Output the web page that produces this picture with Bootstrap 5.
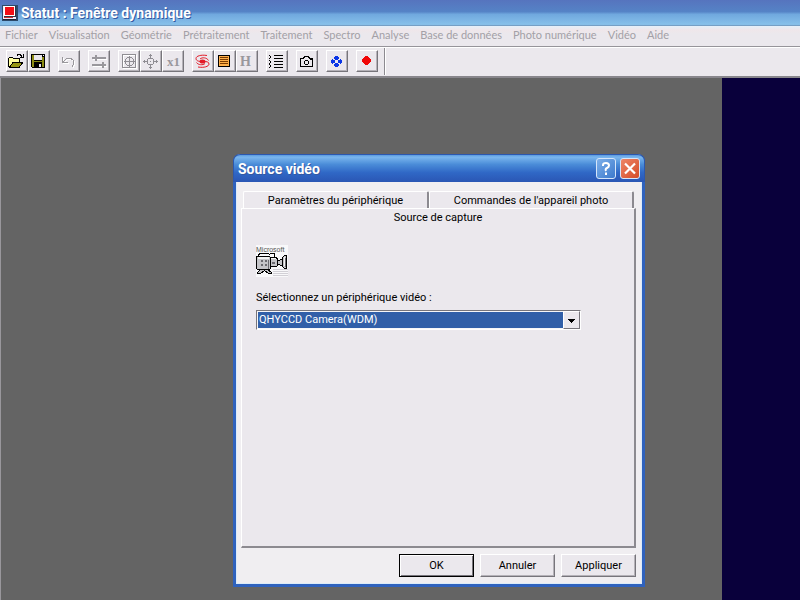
<!DOCTYPE html>
<html lang="fr">
<head>
<meta charset="utf-8">
<meta name="viewport" content="width=device-width, initial-scale=1">
<title>Statut : Fenêtre dynamique</title>
<link href="https://cdn.jsdelivr.net/npm/bootstrap@5.3.0/dist/css/bootstrap.min.css" rel="stylesheet">
<style>
:root { --face: #ebe8ed; --shade: #8c8a90; --ui: Roboto, "Liberation Sans", sans-serif; --head: Roboto, "Open Sans", sans-serif; }
body { font-family: var(--ui); font-size: 11px; line-height: 16px; background: #646464; color: #000; }
button { font: inherit; color: inherit; }
svg { display: block; shape-rendering: crispEdges; }
.app-title { height: 26px; padding: 0 2px; gap: 3px; background: linear-gradient(#5674be 0, #5583c6 45%, #70a8de 55%, #86c0ea 94%, #6d8fb4 100%); color: #fff; font: bold 14px/26px var(--head); }
.app-title h1, .dlg-title h2 { font: inherit; text-shadow: 1px 1px 0 #3458a0; }
.menu-strip { height: 20px; padding: 0 5px; gap: 11px; background: linear-gradient(#e4f0fa 0, #efe6ea 4px, #ebe8ed 8px); font: 11px/18px Lato, sans-serif; }
.menu-strip .nav-link { color: #a3a0a6; }
.tool-strip { height: 32px; padding: 0 6px 1px; background: var(--face); border-top: 1px solid #96949a; border-bottom: 2px solid #88868c; box-shadow: inset 0 1px #fff; }
.tool-btn { width: 22px; height: 22px; border: 1px solid; border-color: #fff #77757b #77757b #fff; box-shadow: inset -1px -1px #b5b2b8; background: var(--face); border-radius: 0; }
.tool-end { width: 2px; height: 27px; margin-left: -2px; border-left: 1px solid #8c8a90; background: #fff; }
.stage { border-left: 1px solid #99979c; background: #646464; }
.night { width: 78px; background: #09003b; }
.dlg { left: 232px; top: 76px; width: 412px; border: 3px solid #2f62bd; border-top: 0; border-radius: 7px 7px 0 0; background: #f0eef1; box-shadow: inset 0 0 0 1px #dcebf8; outline: 0; }
.dlg-title { height: 28px; margin: 0 -3px; border-radius: 7px 7px 0 0; border: 1px solid #2c58ae; border-bottom: 0; background: linear-gradient(#5a9ade 0, #7ab6ee 8%, #4a8cd8 35%, #3068c6 65%, #2a56b4 100%); color: #fff; font: bold 14px/28px var(--head); }
.cap-btn { width: 20px; height: 21px; border: 1px solid #d6e6fa; border-radius: 3px; color: #fff; }
.cap-btn svg { shape-rendering: auto; }
.cap-help { background: linear-gradient(135deg, #7db0ea, #3c79cc); }
.cap-close { background: linear-gradient(135deg, #ee8668, #d44c28); }
.dlg-body { padding: 9px 6px 7px 5px; }
.tab-row { margin: 0 2px; }
.tab-back { height: 17px; padding: 2px 0 0; line-height: 14px; border: 0; border-top: 1px solid #fff; border-left: 1px solid #fff; border-right: 2px solid var(--shade); background: var(--face); border-radius: 2px 2px 0 0; }
.tab-front { height: 18px; padding: 0; border: 0; background: transparent; }
.sheet { height: 340px; border: 1px solid #fff; border-right: 2px solid var(--shade); border-bottom: 2px solid var(--shade); background: var(--face); }
.sheet-body { padding: 18px 14px 0; }
.cam { margin-bottom: 12px; }
.combo { width: 325px; height: 20px; border: 1px solid; border-color: #77757b #fff #fff #77757b; }
.combo select { height: 18px; appearance: none; border: 1px solid #f6f6f8; padding: 0 18px 0 1px; background: #315fa8; color: #fff; font: 11px/16px var(--ui); border-radius: 0; outline: 0; }
.combo-arrow { width: 17px; height: 18px; background: var(--face); border: 1px solid; border-color: #fff #77757b #77757b #fff; pointer-events: none; }
.actions { gap: 6px; padding-top: 6px; }
.push { width: 75px; height: 23px; border: 1px solid; border-color: #fff #77757b #77757b #fff; box-shadow: inset -1px -1px #b5b2b8; background: var(--face); padding: 0; border-radius: 0; }
.push-default { border-color: #000; box-shadow: inset 1px 1px #fff, inset -1px -1px #77757b; }
</style>
</head>
<body class="d-flex flex-column vh-100 overflow-hidden">
<header>
  <div class="app-title d-flex align-items-center">
    <svg width="16" height="16" viewBox="0 0 16 16" aria-hidden="true"><path fill="#2c4a6a" d="M0 0h16v16H0z"/><path fill="#eef" d="M1 1h13v14H1z"/><path fill="#334" d="M2 1h12v11H2z"/><path fill="#fff" d="M2 1h11v10H2z"/><path fill="#f00f17" d="M3 2h9v8H3z"/><path fill="#c33" d="M2 12h9v1H2z"/><path fill="#223" d="M1 14h13v1H1z"/></svg>
    <h1 class="m-0">Statut : Fenêtre dynamique</h1>
  </div>
  <nav class="menu-strip nav flex-nowrap" aria-label="Menu principal">
    <a class="nav-link p-0" href="#">Fichier</a>
    <a class="nav-link p-0" href="#">Visualisation</a>
    <a class="nav-link p-0" href="#">Géométrie</a>
    <a class="nav-link p-0" href="#">Prétraitement</a>
    <a class="nav-link p-0" href="#">Traitement</a>
    <a class="nav-link p-0" href="#">Spectro</a>
    <a class="nav-link p-0" href="#">Analyse</a>
    <a class="nav-link p-0" href="#">Base de données</a>
    <a class="nav-link p-0" href="#">Photo numérique</a>
    <a class="nav-link p-0" href="#">Vidéo</a>
    <a class="nav-link p-0" href="#">Aide</a>
  </nav>
  <div class="tool-strip d-flex align-items-center gap-2" role="toolbar" aria-label="Outils">
    <div class="d-flex">
      <button class="tool-btn p-0" aria-label="Ouvrir"><svg width="20" height="20" viewBox="0 0 20 20"><path fill="#ffffa0" d="M2 7h4v1h6v3H6l-3 5H2z"/><path fill="#969614" d="M6 11h10l-4 5H3z"/><path fill="none" stroke="#000" d="M1.500 16V7.500l1-1h3l1 1h5.500V11M2 16.500h10l4-5.500H6.500L2.500 16M10 4.500l1-1h2l2 2M16.500 3v3.500H13"/></svg></button>
      <button class="tool-btn p-0" aria-label="Enregistrer"><svg width="20" height="20" viewBox="0 0 20 20"><path d="M2 3h14v14H3l-1-1z"/><path fill="#8c8c14" d="M3 4h2v12H3zm10 2h2v10h-2zM5 10h8v1H5z"/><path fill="#ebe8ed" d="M5 4h8v5H5zm5 9h2v3h-2z"/><path fill="#fff" d="M14 4h1v1h-1z"/></svg></button>
    </div>
    <button class="tool-btn p-0" aria-label="Annuler l'action"><svg width="20" height="20" viewBox="0 0 20 20"><g fill="none"><path stroke="#fff" d="M4.500 7v5.500H10M5 12l3-3 4-1 3 2 1 3-2 4"/><path stroke="#99979c" d="M3.500 6v5.500H9M4 11l3-3 4-1 3 2 1 3-2 4"/></g></svg></button>
    <button class="tool-btn p-0" aria-label="Seuils"><svg width="20" height="20" viewBox="0 0 20 20"><path fill="#fff" d="M4 8h14v1H4zm0 7h14v1H4z"/><path fill="#99979c" d="M3 6h14v2H3zm0 7h14v2H3zM6 4h2v6H6zm7 7h2v6h-2z"/></svg></button>
    <div class="d-flex">
      <button class="tool-btn p-0" aria-label="Cible"><svg width="20" height="20" viewBox="0 0 20 20"><g fill="none"><path stroke="#fff" d="M4.500 4.500h13v13h-13z"/><path stroke="#8f8d93" d="M3.500 3.500h13v13h-13zM10.500 5v11M5 10.500h11M8.500 6.500h4l2 2v4l-2 2h-4l-2-2v-4z"/></g></svg></button>
      <button class="tool-btn p-0" aria-label="Centrer"><svg width="20" height="20" viewBox="0 0 20 20"><g fill="none" stroke="#8f8d93"><path d="M7.500 7.500h4l1 1v4l-1 1h-4l-1-1v-4zM9.500 3v4M9.500 14v4M2 10.500h4M13 10.500h4M8 4.500h3M8 16.500h3M3.500 9v3M15.500 9v3"/></g><path fill="#8f8d93" d="M9 10h1v1H9z"/></svg></button>
      <button class="tool-btn p-0" aria-label="Zoom x1"><svg width="20" height="20" viewBox="0 0 20 20"><text x="4" y="15" font-family="Liberation Serif, serif" font-size="13" font-weight="bold" fill="#99979c">x1</text></svg></button>
    </div>
    <div class="d-flex">
      <button class="tool-btn p-0" aria-label="Spirale"><svg width="20" height="20" viewBox="0 0 20 20"><g shape-rendering="auto"><path fill="none" stroke="#e31b28" d="M14 4.500C8 3.500 3 5 3 7.500S6 10.500 9 10.500M15.500 9.500C14 6.500 9 6 7 8M5 16C11 17 16 15.500 16 13S13 10.500 10 10.500M3.500 11.500C5 14 10 14.500 12 12.500"/><ellipse cx="9.500" cy="10.500" rx="3" ry="2" fill="#e31b28"/></g></svg></button>
      <button class="tool-btn p-0" aria-label="Liste"><svg width="20" height="20" viewBox="0 0 20 20"><path d="M3 4h12v12H3z"/><path fill="#ffb04a" d="M4 5h10v10H4z"/><path fill="#7a3b00" d="M5 6h8v1H5zm0 2h8v1H5zm0 2h8v1H5zm0 2h8v1H5z"/></svg></button>
      <button class="tool-btn p-0" aria-label="Histogramme"><svg width="20" height="20" viewBox="0 0 20 20"><text x="3" y="15" font-family="Liberation Serif, serif" font-size="14" font-weight="bold" fill="#99979c">H</text></svg></button>
    </div>
    <button class="tool-btn p-0" aria-label="Script"><svg width="20" height="20" viewBox="0 0 20 20"><path d="M7 4h9v1H7zm0 3h9v1H7zm0 3h9v1H7zm0 3h9v1H7zm0 3h9v1H7z"/><path fill="none" stroke="#000" d="M2 4l2 2-2 2M2 9l2 2-2 2M2 13l2 2-2 2"/></svg></button>
    <button class="tool-btn p-0" aria-label="Appareil photo"><svg width="20" height="20" viewBox="0 0 20 20"><g fill="none" stroke="#000"><path d="M3.500 7.500h3l1-2h4l1 2h3v8h-12z"/><path d="M8.500 9.500h2l1 1v2l-1 1h-2l-1-1v-2z"/></g><path d="M13 8h2v1h-2z"/></svg></button>
    <button class="tool-btn p-0" aria-label="Déplacer"><svg width="20" height="20" viewBox="0 0 20 20"><path fill="#0b36e6" d="M8 5h3v1h1v2h-1v1h2V8h1v1h1v3h-1v1h-1v-1h-2v1h1v2h-1v1H8v-1H7v-2h1v-1H6v1H5v-1H4V9h1V8h1v1h2V8H7V6h1z"/><path fill="#ebe8ed" d="M8 9h3v3H8z"/></svg></button>
    <button class="tool-btn p-0" aria-label="Acquisition"><svg width="20" height="20" viewBox="0 0 20 20"><path fill="#f00808" d="M8 5h3v1h1v1h1v1h1v3h-1v1h-1v1h-1v1H8v-1H7v-1H6v-1H5V8h1V7h1V6h1z"/></svg></button>
    <span class="tool-end"></span>
  </div>
</header>
<main class="stage position-relative flex-grow-1 d-flex justify-content-end">
  <div class="night"></div>
  <section class="dlg position-absolute" role="dialog" aria-labelledby="dlg-name">
    <div class="dlg-title d-flex align-items-center ps-1 pe-1">
      <h2 id="dlg-name" class="m-0 flex-grow-1">Source vidéo</h2>
      <div class="d-flex gap-1">
        <button class="cap-btn cap-help p-0" aria-label="Aide"><svg width="18" height="19" viewBox="0 0 18 19"><path fill="none" stroke="#fff" stroke-width="2" d="M6 7V6q0-2 3-2t3 2.500Q12 8 10 9T9 12M9 13.500V16"/></svg></button>
        <button class="cap-btn cap-close p-0" aria-label="Fermer"><svg width="18" height="19" viewBox="0 0 18 19"><path stroke="#fff" stroke-width="2.200" d="M4 4.500l10 10M14 4.500l-10 10"/></svg></button>
      </div>
    </div>
    <div class="dlg-body">
      <div role="tablist" class="tab-row d-flex">
        <button class="tab-back flex-fill" role="tab" aria-selected="false">Paramètres du périphérique</button>
        <button class="tab-back flex-fill" role="tab" aria-selected="false">Commandes de l'appareil photo</button>
      </div>
      <div class="sheet">
        <button class="tab-front w-100" role="tab" aria-selected="true">Source de capture</button>
        <div class="sheet-body">
          <svg width="33" height="33" viewBox="0 0 33 33" class="cam" role="img" aria-label="Microsoft">
            <path fill="#f8f8fa" d="M0 0h32v32H0z"/>
            <path fill="#d2d0d6" d="M17 24h15v1H17zm0 2h15v1H17zm0 2h15v1H17zm0 2h15v1H17z"/>
            <text x="0" y="7" font-family="Liberation Sans, sans-serif" font-size="7" fill="#555">Microsoft</text>
            <g stroke="#000" fill="#c4c4c8">
              <path fill="none" d="M1.500 12.500l2-4h9l2 2M13.500 8.500h5v4"/>
              <path d="M0.500 11.500h13l1 1v11l-1 1h-12l-1-1z"/>
              <path d="M14.500 12.500h6l1 2v6l-1 1h-6z"/>
              <path d="M21.500 15.500h2l3-2v8l-3-2h-2z"/>
              <path d="M26.500 12.500l2-2h2v13h-2l-2-2z"/>
              <path d="M4.500 24.500l-3 3v1h3l4-3 4 3h3v-1l-4-3z"/>
            </g>
            <path fill="#f4f4f4" d="M2 12h11v2H2zM28 12h1v9h-1zM15 13h5v1h-5z"/>
            <path fill="#6b6b70" d="M5 15h2v2H5zm4 0h2v2H9zm-4 4h2v2H5zm4 0h2v2H9zM16 17h3v2h-3zM29 13h1v9h-1zM12 15h1v9h-1z"/>
          </svg>
          <label for="source" class="d-block mb-1">Sélectionnez un périphérique vidéo :</label>
          <div class="combo position-relative">
            <select id="source" class="w-100 d-block"><option>QHYCCD Camera(WDM)</option></select>
            <span class="combo-arrow position-absolute top-0 end-0"><svg width="15" height="16" viewBox="0 0 15 16"><path d="M4 7h7v1h-1v1H9v1H8v1H7v-1H6V9H5V8H4z"/></svg></span>
          </div>
        </div>
      </div>
      <div class="actions d-flex justify-content-end">
        <button class="push push-default">OK</button>
        <button class="push">Annuler</button>
        <button class="push">Appliquer</button>
      </div>
    </div>
  </section>
</main>
<script src="https://cdn.jsdelivr.net/npm/bootstrap@5.3.0/dist/js/bootstrap.bundle.min.js"></script>
</body>
</html>
